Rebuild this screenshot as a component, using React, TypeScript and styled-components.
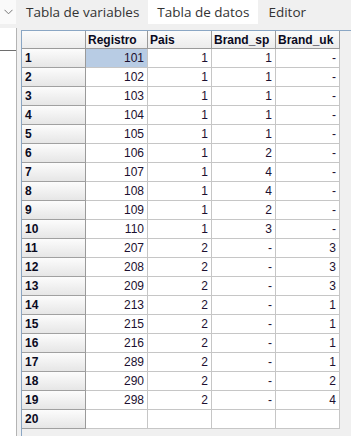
import { Fragment } from "react";
import styled, { createGlobalStyle } from "styled-components";

const GlobalStyle = createGlobalStyle`
  html, body {
    margin: 0;
    padding: 0;
    background: #f0f0f0;
    overflow: hidden;
  }
`;

const Page = styled.div`
  width: 351px;
  height: 436px;
  display: flex;
  flex-direction: column;
  background: #f0f0f0;
  font-family: "Liberation Sans", Arial, sans-serif;
`;

const TabBar = styled.div`
  height: 24px;
  display: flex;
  align-items: stretch;
`;

const ChevronBox = styled.div`
  width: 16px;
  background: #fafafa;
  display: flex;
  align-items: center;
  justify-content: center;
  color: #777;
`;

const Tab = styled.div<{ $active?: boolean }>`
  padding: 0 9px 0 ${(p) => (p.$active ? "9px" : "10px")};
  display: flex;
  align-items: center;
  font-family: "Open Sans", "Noto Sans", sans-serif;
  font-size: 13.5px;
  color: #333;
  background: ${(p) => (p.$active ? "#ffffff" : "transparent")};
`;

const Body = styled.div`
  flex: 1;
  display: flex;
  margin-top: 4px;
  gap: 4px;
  min-height: 0;
`;

const SidePanel = styled.div`
  width: 16px;
  background: #ffffff;
  border-right: 1px solid #b4b4b4;
  padding-top: 22px;
`;

const SideRule = styled.div`
  height: 1px;
  background: #6e6e6e;
`;

const GridFrame = styled.div`
  flex: 1;
  margin-top: 2px;
  border-top: 1px solid #8aa6c4;
  border-left: 1px solid #8aa6c4;
  background: #f0f0f0;
`;

const Grid = styled.div`
  display: grid;
  grid-template-columns: 64px 62px 64px 64px 64px;
  grid-auto-rows: 19px;
  grid-template-rows: 18px;
  width: 318px;
`;

const HeadCell = styled.div`
  box-sizing: border-box;
  background: linear-gradient(#fbfbfb, #ececec);
  border-right: 1px solid #9a9a9a;
  border-bottom: 1px solid #9a9a9a;
  font-size: 12px;
  font-weight: bold;
  color: #0a0a1e;
  padding-left: 2px;
  display: flex;
  align-items: center;
`;

const RowHead = styled(HeadCell)`
  background: linear-gradient(#fcfcfc, #e6e6e6);
  border-bottom-color: #a0a0a0;
  padding-left: 3px;
`;

const Cell = styled.div<{ $selected?: boolean }>`
  box-sizing: border-box;
  background: ${(p) => (p.$selected ? "#b8cce4" : "#ffffff")};
  border-right: 1px solid #c6c6c6;
  border-bottom: 1px solid #c6c6c6;
  font-size: 12px;
  color: #1c1030;
  padding-right: 3px;
  display: flex;
  align-items: center;
  justify-content: flex-end;
`;

const rows: (string | number)[][] = [
  [101, 1, 1, "-"],
  [102, 1, 1, "-"],
  [103, 1, 1, "-"],
  [104, 1, 1, "-"],
  [105, 1, 1, "-"],
  [106, 1, 2, "-"],
  [107, 1, 4, "-"],
  [108, 1, 4, "-"],
  [109, 1, 2, "-"],
  [110, 1, 3, "-"],
  [207, 2, "-", 3],
  [208, 2, "-", 3],
  [209, 2, "-", 3],
  [213, 2, "-", 1],
  [215, 2, "-", 1],
  [216, 2, "-", 1],
  [289, 2, "-", 1],
  [290, 2, "-", 2],
  [298, 2, "-", 4],
  ["", "", "", ""],
];

const columns = ["Registro", "Pais", "Brand_sp", "Brand_uk"];

export default function App() {
  return (
    <>
      <GlobalStyle />
      <Page>
        <TabBar>
          <ChevronBox>
            <svg width="9" height="6" viewBox="0 0 9 6">
              <path d="M0.5 0.8 L4.5 4.8 L8.5 0.8" fill="none" stroke="#777" strokeWidth="1" />
            </svg>
          </ChevronBox>
          <Tab>Tabla de variables</Tab>
          <Tab $active>Tabla de datos</Tab>
          <Tab>Editor</Tab>
        </TabBar>
        <Body>
          <SidePanel>
            <SideRule />
          </SidePanel>
          <GridFrame>
            <Grid>
              <HeadCell />
              {columns.map((c) => (
                <HeadCell key={c}>{c}</HeadCell>
              ))}
              {rows.map((r, i) => (
                <Fragment key={i}>
                  <RowHead>{i + 1}</RowHead>
                  {r.map((v, j) => (
                    <Cell key={j} $selected={i === 0 && j === 0}>
                      {v}
                    </Cell>
                  ))}
                </Fragment>
              ))}
            </Grid>
          </GridFrame>
        </Body>
      </Page>
    </>
  );
}
